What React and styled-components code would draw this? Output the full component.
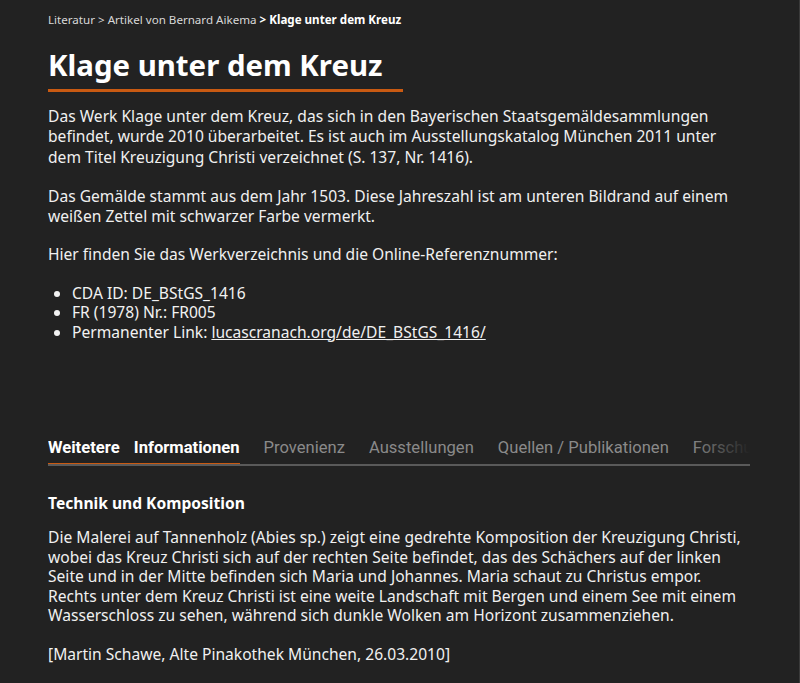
import React from "react";
import styled, { createGlobalStyle } from "styled-components";

const GlobalStyle = createGlobalStyle`
  html, body {
    margin: 0;
    padding: 0;
    background: #222222;
  }
  body {
    font-family: "Noto Sans", "Open Sans", sans-serif;
    color: #f2f2f2;
  }
`;

const Page = styled.div`
  min-height: 683px;
  box-sizing: border-box;
  padding: 12px 48px 20px 48px;
  border-right: 1px solid #3a3a3a;
`;

const Breadcrumb = styled.nav`
  font-size: 11.6px;
  line-height: 16px;
  color: #d8d8d8;
  strong {
    color: #ffffff;
    font-weight: 700;
  }
`;

const Title = styled.h1`
  display: inline-block;
  margin: 17px 0 0 0;
  padding: 0 20px 4px 0;
  font-size: 29.4px;
  line-height: 40px;
  font-weight: 700;
  color: #ffffff;
  border-bottom: 3px solid #c95a12;
`;

const Text = styled.p`
  margin: ${(p) => p.$top || 0}px 0 0 0;
  max-width: 720px;
  font-size: 15.6px;
  line-height: ${(p) => p.$lh || 20.3}px;
  color: #f0f0f0;
`;

const List = styled.ul`
  margin: 19px 0 0 0;
  padding-left: 24px;
  font-size: 15.6px;
  line-height: 19.5px;
  a {
    color: #f0f0f0;
    text-decoration: underline;
  }
`;

const Tabs = styled.div`
  position: relative;
  margin-top: 96px;
  width: 702px;
  display: flex;
  gap: 24px;
  overflow: hidden;
  white-space: nowrap;
  border-bottom: 2px solid #5a5a5a;
  &::after {
    content: "";
    position: absolute;
    right: 0;
    top: 0;
    bottom: 0;
    width: 60px;
    background: linear-gradient(to right, rgba(34, 34, 34, 0), #222222);
  }
`;

const Tab = styled.div`
  flex: none;
  padding: 0 0 5px 0;
  margin-bottom: -2px;
  font-family: "Roboto", "Noto Sans", sans-serif;
  font-size: 16.6px;
  line-height: 20px;
  font-weight: ${(p) => (p.$active ? 700 : 400)};
  color: ${(p) => (p.$active ? "#ffffff" : "#8a8a8a")};
  border-bottom: 3px solid ${(p) => (p.$active ? "#c95a12" : "transparent")};
  word-spacing: ${(p) => (p.$active ? "10px" : "0")};
`;

const SectionTitle = styled.h3`
  margin: 27px 0 0 0;
  font-size: 15.6px;
  line-height: 20px;
  font-weight: 700;
  color: #ffffff;
`;

export default function App() {
  return (
    <>
      <GlobalStyle />
      <Page>
        <Breadcrumb>
          Literatur &gt; Artikel von Bernard Aikema <strong>&gt; Klage unter dem Kreuz</strong>
        </Breadcrumb>
        <Title>Klage unter dem Kreuz</Title>
        <Text $top={14}>
          Das Werk Klage unter dem Kreuz, das sich in den Bayerischen Staatsgemäldesammlungen
          <br />
          befindet, wurde 2010 überarbeitet. Es ist auch im Ausstellungskatalog München 2011 unter
          <br />
          dem Titel Kreuzigung Christi verzeichnet (S. 137, Nr. 1416).
        </Text>
        <Text $top={19}>
          Das Gemälde stammt aus dem Jahr 1503. Diese Jahreszahl ist am unteren Bildrand auf einem
          <br />
          weißen Zettel mit schwarzer Farbe vermerkt.
        </Text>
        <Text $top={18}>Hier finden Sie das Werkverzeichnis und die Online-Referenznummer:</Text>
        <List>
          <li>CDA ID: DE_BStGS_1416</li>
          <li>FR (1978) Nr.: FR005</li>
          <li>
            Permanenter Link: <a href="#">lucascranach.org/de/DE_BStGS_1416/</a>
          </li>
        </List>
        <Tabs>
          <Tab $active>Weitetere Informationen</Tab>
          <Tab>Provenienz</Tab>
          <Tab>Ausstellungen</Tab>
          <Tab>Quellen / Publikationen</Tab>
          <Tab>Forschungsdaten</Tab>
        </Tabs>
        <SectionTitle>Technik und Komposition</SectionTitle>
        <Text $top={15} $lh={19.5}>
          Die Malerei auf Tannenholz (Abies sp.) zeigt eine gedrehte Komposition der Kreuzigung Christi,
          <br />
          wobei das Kreuz Christi sich auf der rechten Seite befindet, das des Schächers auf der linken
          <br />
          Seite und in der Mitte befinden sich Maria und Johannes. Maria schaut zu Christus empor.
          <br />
          Rechts unter dem Kreuz Christi ist eine weite Landschaft mit Bergen und einem See mit einem
          <br />
          Wasserschloss zu sehen, während sich dunkle Wolken am Horizont zusammenziehen.
        </Text>
        <Text $top={19} $lh={19.5}>[Martin Schawe, Alte Pinakothek München, 26.03.2010]</Text>
      </Page>
    </>
  );
}
